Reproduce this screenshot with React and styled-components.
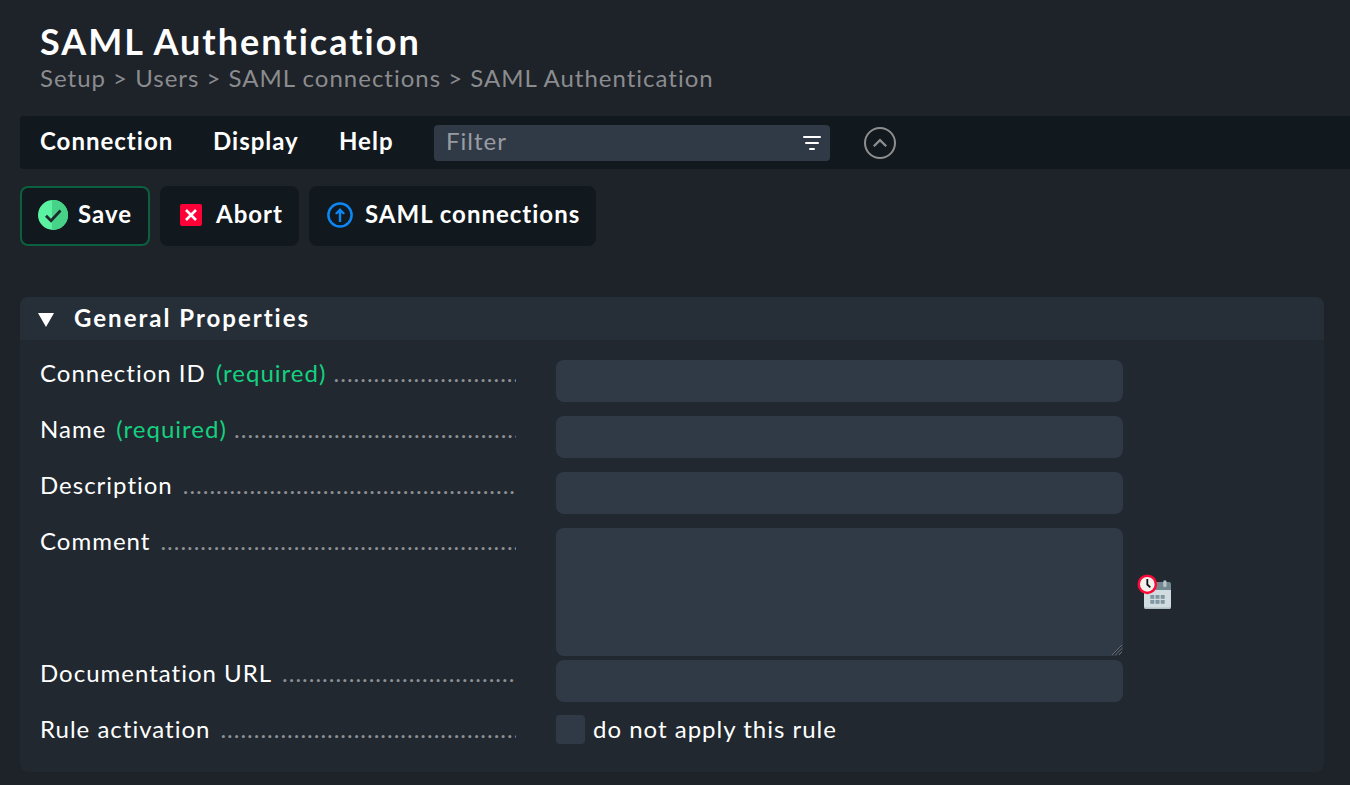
import React from "react";
import styled, { createGlobalStyle } from "styled-components";

const GlobalStyle = createGlobalStyle`
  * { box-sizing: border-box; }
  html, body { height: 100%; }
  body {
    margin: 0;
    background: #1e2229;
    color: #fff;
    font-family: Lato, "Liberation Sans", sans-serif;
    font-size: 24px;
    line-height: 29px;
    letter-spacing: 1px;
    overflow: hidden;
  }
  input, textarea, button { font: inherit; letter-spacing: inherit; color: inherit; }
`;

const Page = styled.main`
  height: 785px;
  padding: 19px 0 0 20px;
  overflow: hidden;
`;

const Header = styled.header`
  height: 97px;
  padding-left: 20px;
`;

const Title = styled.h1`
  margin: 0;
  font-size: 36px;
  line-height: 44px;
  font-weight: 700;
  letter-spacing: 2px;
`;

const Breadcrumb = styled.nav`
  color: #8b8c8e;
  white-space: pre;
`;

const MenuBar = styled.div`
  display: flex;
  align-items: center;
  height: 53px;
  padding-left: 20px;
  background: #11181e;
  border-radius: 4px 0 0 4px;
`;

const MenuItem = styled.div`
  width: ${(p) => p.$width}px;
  padding-bottom: 4px;
  font-weight: 700;
`;

const FilterBox = styled.label`
  display: flex;
  align-items: center;
  width: 396px;
  height: 36px;
  padding: 0 9px 0 12px;
  background: #303a46;
  border-radius: 4px;
`;

const FilterInput = styled.input`
  flex: 1;
  min-width: 0;
  height: 31px;
  padding: 0 0 4px;
  border: 0;
  outline: 0;
  background: transparent;
  &::placeholder { color: #989ca2; opacity: 1; }
`;

const CollapseButton = styled.button`
  display: flex;
  margin: 0 0 0 34px;
  padding: 0;
  border: 0;
  background: none;
`;

const Actions = styled.div`
  display: flex;
  gap: 10px;
  margin-top: 17px;
`;

const ActionButton = styled.button`
  display: flex;
  align-items: center;
  width: ${(p) => p.$width}px;
  height: 60px;
  padding: 0 0 2px ${(p) => p.$inset}px;
  gap: ${(p) => p.$gap}px;
  border: 2px solid ${(p) => (p.$primary ? "#0b613f" : "#11181e")};
  border-radius: 8px;
  background: #11181e;
  font-weight: 700;
  white-space: nowrap;
  svg { flex: none; }
`;

const ActionText = styled.span`
  padding-bottom: 4px;
`;

const Panel = styled.section`
  width: 1304px;
  height: 475px;
  margin-top: 51px;
  overflow: hidden;
  border-radius: 8px;
  background: #21282f;
`;

const PanelHeader = styled.h2`
  display: flex;
  align-items: center;
  gap: 20px;
  height: 43px;
  margin: 0;
  padding: 0 0 2px 18px;
  background: #262f38;
  font-size: 24px;
  font-weight: 700;
  letter-spacing: 2px;
  svg { margin-top: 4px; }
`;

const Form = styled.div`
  padding: 20px 0 0 20px;
`;

const Row = styled.div`
  display: flex;
  align-items: flex-start;
  height: ${(p) => p.$height || 56}px;
`;

const Label = styled.div`
  display: flex;
  width: 476px;
  margin: -2px 40px 0 0;
  overflow: hidden;
  white-space: nowrap;
`;

const Required = styled.span`
  margin-left: 10px;
  color: #15d080;
`;

const Dots = styled.span`
  flex: 1;
  min-width: 0;
  margin-left: ${(p) => p.$gap}px;
  overflow: hidden;
  color: #8e9196;
`;

const TextInput = styled.input`
  width: 567px;
  height: 42px;
  padding: 0 10px;
  border: 0;
  border-radius: 8px;
  background: #303a46;
`;

const CommentField = styled.div`
  display: grid;
  margin-right: 14px;
  > * { grid-area: 1 / 1; }
  > svg { place-self: end; pointer-events: none; }
`;

const TextArea = styled.textarea`
  display: block;
  width: 567px;
  height: 128px;
  border: 0;
  border-radius: 8px;
  background: #303a46;
  resize: none;
`;

const DateButton = styled.button`
  display: flex;
  margin-top: 44px;
  padding: 0;
  border: 0;
  background: none;
`;

const CheckLabel = styled.label`
  display: flex;
  gap: 8px;
  margin-top: -2px;
`;

const CheckBox = styled.input`
  appearance: none;
  width: 29px;
  height: 29px;
  margin: 1px 0 0;
  border-radius: 4px;
  background: #303a46;
`;

const FilterIcon = () => (
  <svg width="18" height="16" viewBox="0 0 18 16" fill="none" stroke="#fff" strokeWidth="2" strokeLinecap="round">
    <path d="M1 2H17M3 8H15M7 14H11" />
  </svg>
);

const CollapseIcon = () => (
  <svg width="32" height="32" viewBox="0 0 32 32" fill="none" stroke="#8e8e8e" strokeWidth="2">
    <circle cx="16" cy="16" r="15" />
    <path d="M9.8 19.3L16 13.1L22.2 19.3" strokeWidth="2.2" />
  </svg>
);

const SaveIcon = () => (
  <svg width="30" height="30" viewBox="0 0 30 30">
    <circle cx="15" cy="15" r="15" fill="#5bf3a2" />
    <path d="M14 0H15A15 15 0 0 1 15 30H14Z" fill="#46d287" />
    <path d="M8 15.7L13 20.7L22.5 10.5" fill="none" stroke="#20272e" strokeWidth="2.7" />
  </svg>
);

const AbortIcon = () => (
  <svg width="22" height="22" viewBox="0 0 22 22">
    <rect width="22" height="22" rx="2" fill="#ff0136" />
    <path d="M6 6L16 16M16 6L6 16" stroke="#fff" strokeWidth="2.6" />
  </svg>
);

const UpIcon = () => (
  <svg width="26" height="26" viewBox="0 0 26 26">
    <circle cx="13" cy="13" r="11.6" fill="none" stroke="#0b87f5" strokeWidth="2.5" />
    <path d="M13 6L18 11.2L16.7 12.6L14.2 11V20H11.8V11L9.3 12.6L8 11.2Z" fill="#0b87f5" />
  </svg>
);

const Triangle = () => (
  <svg width="16" height="14" viewBox="0 0 16 14">
    <path d="M0 0H16L8 14Z" fill="#fff" />
  </svg>
);

const ResizeGrip = () => (
  <svg width="12" height="12" viewBox="0 0 12 12" fill="none" stroke="#70757b" strokeWidth="0.9">
    <path d="M1 11L11 1M4.5 11L11 4.5M8 11L11 8" />
    <path d="M2.2 11L11 2.2M5.7 11L11 5.7M9.2 11L11 9.2" stroke="#1d232a" />
  </svg>
);

const CalendarIcon = () => (
  <svg width="36" height="38" viewBox="0 0 36 38">
    <path d="M7 10H32Q34 10 34 12V18H7Z" fill="#728890" />
    <path d="M7 18H34V34.5Q34 37 31.5 37H9.5Q7 37 7 34.5Z" fill="#d1dce0" />
    <path d="M7 33.5V34.5Q7 37 9.5 37H31.5Q34 37 34 34.5V33.5Q34 35.5 31.5 35.5H9.5Q7 35.5 7 33.5Z" fill="#b0bec5" />
    <rect x="26.2" y="8.2" width="3.4" height="7" rx="1.7" fill="#b5c3c9" />
    <g fill="#8096a0">
      {[13.3, 18.5, 23.7].map((x) => [23, 28].map((y) => <rect key={`${x}-${y}`} x={x} y={y} width="4" height="3.8" />))}
    </g>
    <circle cx="10.3" cy="12.3" r="8.6" fill="#f3f1ee" stroke="#fa0a38" strokeWidth="2.5" />
    <path d="M10.3 7V12.5L13.3 15.3" fill="none" stroke="#111" strokeWidth="1.8" />
  </svg>
);

const dots = ".".repeat(56);

const FormRow = ({ label, required, height, children }) => (
  <Row $height={height}>
    <Label>
      <span>{label}</span>
      {required && <Required>(required)</Required>}
      <Dots $gap={required ? 7.3 : 10}>{dots}</Dots>
    </Label>
    {children}
  </Row>
);

export default function App() {
  return (
    <>
      <GlobalStyle />
      <Page>
        <Header>
          <Title>SAML Authentication</Title>
          <Breadcrumb>{"Setup > Users > SAML connections > SAML Authentication"}</Breadcrumb>
        </Header>
        <MenuBar>
          <MenuItem $width={173}>Connection</MenuItem>
          <MenuItem $width={126}>Display</MenuItem>
          <MenuItem $width={95}>Help</MenuItem>
          <FilterBox>
            <FilterInput placeholder="Filter" />
            <FilterIcon />
          </FilterBox>
          <CollapseButton><CollapseIcon /></CollapseButton>
        </MenuBar>
        <Actions>
          <ActionButton $primary $width={130} $inset={16} $gap={10}>
            <SaveIcon /><ActionText>Save</ActionText>
          </ActionButton>
          <ActionButton $width={139} $inset={18} $gap={14}>
            <AbortIcon /><ActionText>Abort</ActionText>
          </ActionButton>
          <ActionButton $width={287} $inset={16} $gap={12}>
            <UpIcon /><ActionText>SAML connections</ActionText>
          </ActionButton>
        </Actions>
        <Panel>
          <PanelHeader><Triangle />General Properties</PanelHeader>
          <Form>
            <FormRow label="Connection ID" required><TextInput /></FormRow>
            <FormRow label="Name" required><TextInput /></FormRow>
            <FormRow label="Description"><TextInput /></FormRow>
            <FormRow label="Comment" height={132}>
              <CommentField>
                <TextArea />
                <ResizeGrip />
              </CommentField>
              <DateButton><CalendarIcon /></DateButton>
            </FormRow>
            <FormRow label="Documentation URL"><TextInput /></FormRow>
            <FormRow label="Rule activation">
              <CheckLabel><CheckBox type="checkbox" />do not apply this rule</CheckLabel>
            </FormRow>
          </Form>
        </Panel>
      </Page>
    </>
  );
}
